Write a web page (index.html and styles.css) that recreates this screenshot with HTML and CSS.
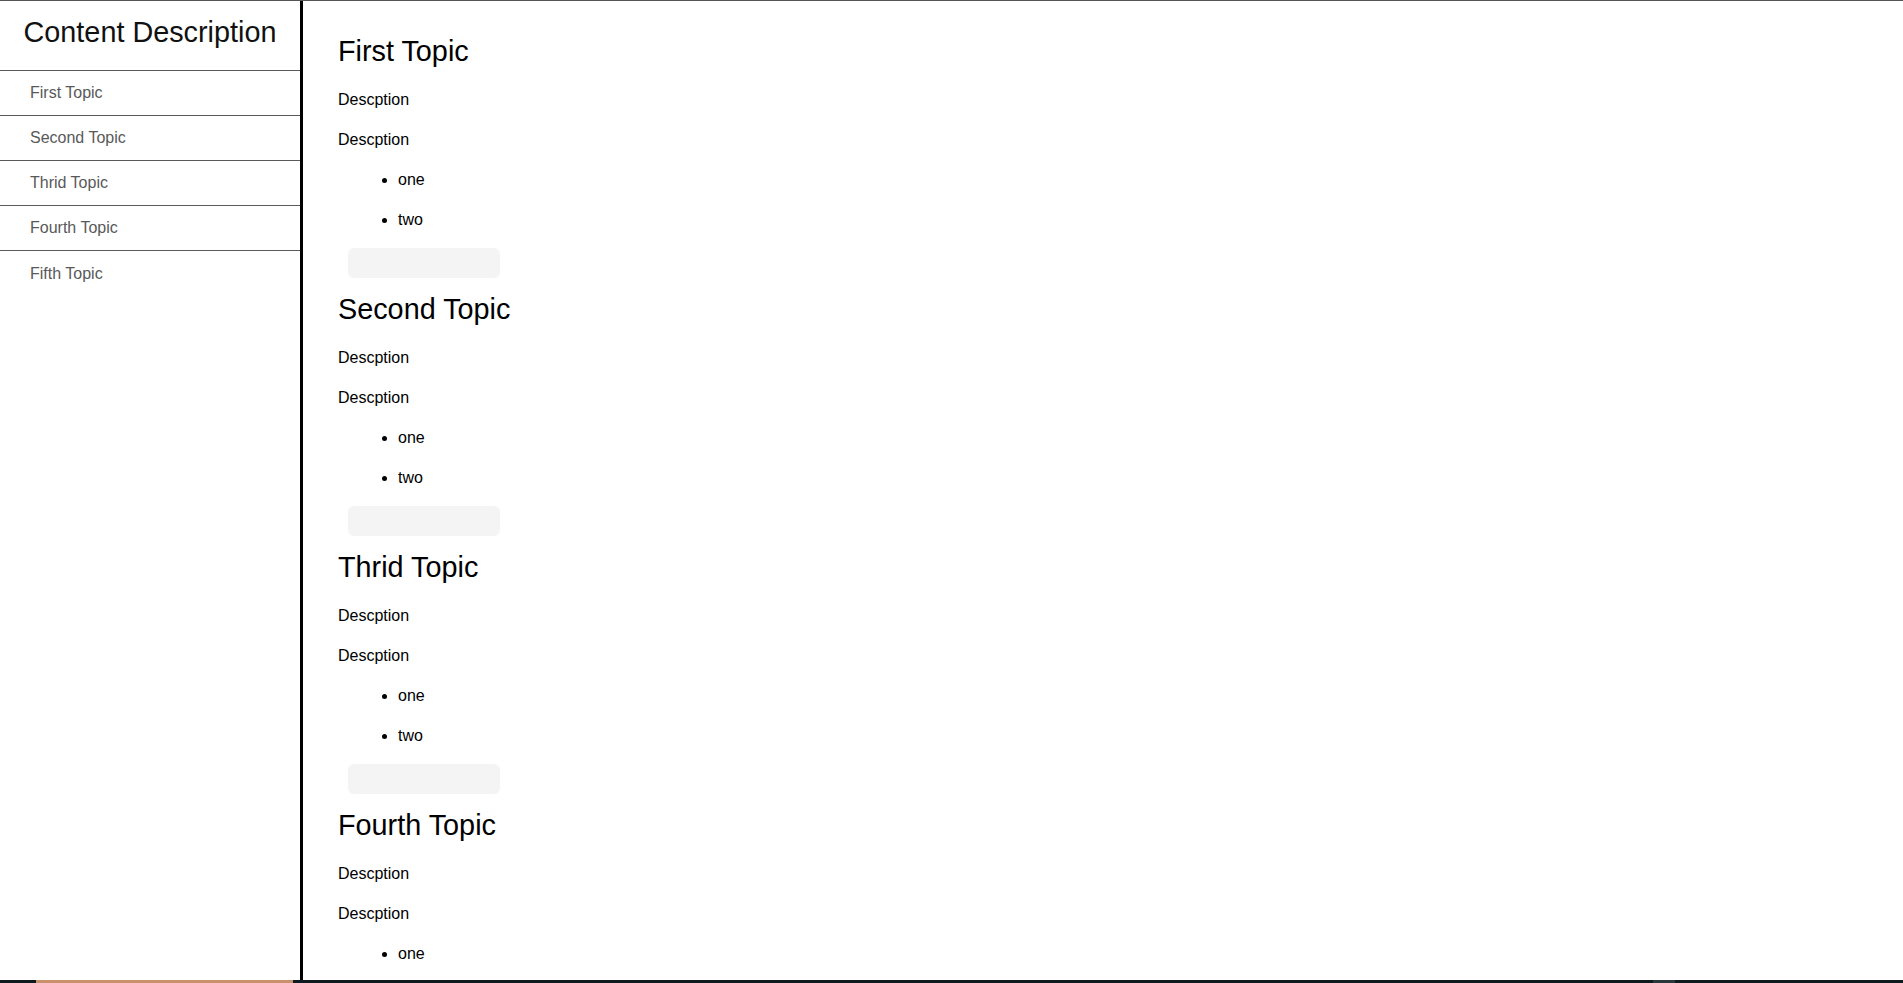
FILE: index.html
```html
<!DOCTYPE html>
<html lang="en">
<head>
<meta charset="utf-8">
<title>Content Description</title>
<link rel="stylesheet" href="styles.css">
</head>
<body>
<div class="page">
  <div class="layout">
    <nav class="sidebar">
      <header class="sidebar-header">Content Description</header>
      <a class="nav-link" href="#first">First Topic</a>
      <a class="nav-link" href="#second">Second Topic</a>
      <a class="nav-link" href="#third">Thrid Topic</a>
      <a class="nav-link" href="#fourth">Fourth Topic</a>
      <a class="nav-link" href="#fifth">Fifth Topic</a>
    </nav>
    <main class="main">
      <section class="topic" id="first">
        <h2 class="topic-title">First Topic</h2>
        <p class="topic-text">Descption</p>
        <p class="topic-text">Descption</p>
        <ul class="topic-list"><li>one</li><li>two</li></ul>
        <div class="code-box"></div>
      </section>
      <section class="topic" id="second">
        <h2 class="topic-title">Second Topic</h2>
        <p class="topic-text">Descption</p>
        <p class="topic-text">Descption</p>
        <ul class="topic-list"><li>one</li><li>two</li></ul>
        <div class="code-box"></div>
      </section>
      <section class="topic" id="third">
        <h2 class="topic-title">Thrid Topic</h2>
        <p class="topic-text">Descption</p>
        <p class="topic-text">Descption</p>
        <ul class="topic-list"><li>one</li><li>two</li></ul>
        <div class="code-box"></div>
      </section>
      <section class="topic" id="fourth">
        <h2 class="topic-title">Fourth Topic</h2>
        <p class="topic-text">Descption</p>
        <p class="topic-text">Descption</p>
        <ul class="topic-list"><li>one</li><li>two</li></ul>
        <div class="code-box"></div>
      </section>
      <section class="topic" id="fifth">
        <h2 class="topic-title">Fifth Topic</h2>
        <p class="topic-text">Descption</p>
        <p class="topic-text">Descption</p>
        <ul class="topic-list"><li>one</li><li>two</li></ul>
        <div class="code-box"></div>
      </section>
    </main>
  </div>
  <div class="taskbar">
    <div class="task-tan"></div>
    <div class="task-gray"></div>
  </div>
</div>
</body>
</html>
```

FILE: styles.css
```css
* { box-sizing: border-box; }

html, body {
  margin: 0;
  padding: 0;
  height: 100%;
  overflow: hidden;
  background: #ffffff;
}

body {
  font-family: "Liberation Sans", Arial, sans-serif;
  color: #000;
}

.page {
  height: 983px;
  display: flex;
  flex-direction: column;
  border-top: 1px solid #555555;
}

.layout {
  flex: 1;
  display: flex;
  min-height: 0;
}

.sidebar {
  width: 303px;
  flex: none;
  border-right: 3px solid #000;
  display: flex;
  flex-direction: column;
}

.sidebar-header {
  height: 70px;
  padding-top: 15px;
  text-align: center;
  font-size: 28.8px;
  color: #111;
  border-bottom: 1px solid #5a5a5a;
}

.nav-link {
  height: 45px;
  display: flex;
  align-items: center;
  padding-left: 30px;
  font-size: 16px;
  color: #595959;
  text-decoration: none;
  border-bottom: 1px solid #5a5a5a;
}

.nav-link:last-child {
  border-bottom: none;
}

.main {
  flex: 1;
  overflow: hidden;
  padding: 34px 0 0 35px;
}

.topic-title {
  margin: 0 0 20px;
  font-size: 28.8px;
  font-weight: normal;
  line-height: 33px;
}

.topic-text {
  margin: 0 0 16px;
  font-size: 16px;
  line-height: 24px;
}

.topic-list {
  margin: 0 0 16px;
  padding-left: 60px;
  font-size: 16px;
  line-height: 24px;
}

.topic-list li + li {
  margin-top: 16px;
}

.code-box {
  margin: 0 0 15px 10px;
  width: 152px;
  height: 30px;
  border-radius: 6px;
  background: #f4f4f4;
}

.taskbar {
  height: 3px;
  flex: none;
  background: #0e1a1f;
  position: relative;
}

.task-tan {
  position: absolute;
  left: 36px;
  top: 0;
  width: 257px;
  height: 3px;
  background: #c8916b;
}

.task-gray {
  position: absolute;
  left: 1653px;
  top: 0;
  width: 22px;
  height: 3px;
  background: #2b363b;
}
```
